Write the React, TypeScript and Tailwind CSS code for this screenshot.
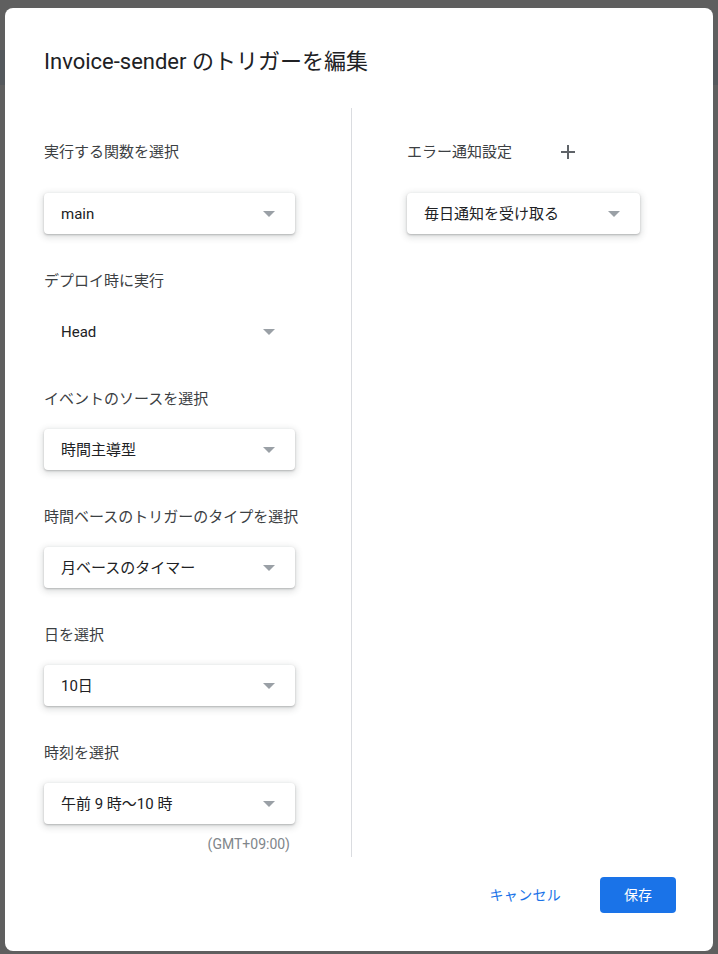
const font = "font-['Roboto','Noto_Sans_CJK_JP',sans-serif]"

function Arrow() {
  return (
    <svg width="12" height="6" viewBox="0 0 12 6" className="shrink-0">
      <path d="M0 0 L12 0 L6 6 Z" fill="#9aa0a6" />
    </svg>
  )
}

function Select({ value, width, flat = false }: { value: string; width: string; flat?: boolean }) {
  return (
    <div
      className={
        "flex h-[41px] items-center justify-between rounded-[4px] bg-white pl-[17px] pr-[20px] " +
        width +
        (flat ? "" : " shadow-[0_1px_2px_rgba(60,64,67,0.3),0_2px_6px_2px_rgba(60,64,67,0.15)]")
      }
    >
      <span className="text-[15px] leading-5 text-[#202124]">{value}</span>
      <Arrow />
    </div>
  )
}

function Label({ children, className = "" }: { children: React.ReactNode; className?: string }) {
  return <div className={"text-[15px] leading-5 text-[#3c4043] " + className}>{children}</div>
}

export default function App() {
  return (
    <div
      className={
        "h-[954px] w-[718px] overflow-hidden pl-[5px] pt-[8px] bg-[linear-gradient(to_bottom,#5f5f5f_50px,#55595d_50px,#55595d_85px,#5f5f5f_85px)] " +
        font
      }
    >
      <div className="flex h-[943px] w-[708px] flex-col rounded-[8px] bg-white">
        <h1 className="mt-[40px] pl-[39px] text-[22px] leading-7 text-[#202124]">
          Invoice-sender のトリガーを編集
        </h1>

        <div className="mt-[32px] flex">
          {/* left column */}
          <div className="flex w-[346px] flex-col pl-[39px] pb-[3px]">
            <Label className="mt-[34px]">実行する関数を選択</Label>
            <div className="mt-[31px]">
              <Select value="main" width="w-[251px]" />
            </div>

            <Label className="mt-[37px]">デプロイ時に実行</Label>
            <div className="mt-[20px]">
              <Select value="Head" width="w-[251px]" flat />
            </div>

            <Label className="mt-[37px]">イベントのソースを選択</Label>
            <div className="mt-[20px]">
              <Select value="時間主導型" width="w-[251px]" />
            </div>

            <Label className="mt-[37px]">時間ベースのトリガーのタイプを選択</Label>
            <div className="mt-[20px]">
              <Select value="月ベースのタイマー" width="w-[251px]" />
            </div>

            <Label className="mt-[37px]">日を選択</Label>
            <div className="mt-[20px]">
              <Select value="10日" width="w-[251px]" />
            </div>

            <Label className="mt-[37px]">時刻を選択</Label>
            <div className="mt-[20px]">
              <Select value="午前 9 時〜10 時" width="w-[251px]" />
            </div>
            <div className="mt-[10px] w-[246px] text-right text-[14px] leading-5 text-[#80868b]">
              (GMT+09:00)
            </div>
          </div>

          {/* divider */}
          <div className="w-px bg-[#dadce0]" />

          {/* right column */}
          <div className="flex flex-col pl-[55px]">
            <div className="mt-[34px] flex items-center">
              <Label>エラー通知設定</Label>
              <svg width="14" height="14" viewBox="0 0 14 14" className="ml-[49px]">
                <path d="M7 0 V14 M0 7 H14" stroke="#5f6368" strokeWidth="2" />
              </svg>
            </div>
            <div className="mt-[31px]">
              <Select value="毎日通知を受け取る" width="w-[233px]" />
            </div>
          </div>
        </div>

        <div className="mt-[20px] flex items-center justify-end pr-[37px]">
          <button className="mr-[15px] h-[36px] px-[24px] text-[14px] tracking-[0.02em] text-[#1a73e8]">
            キャンセル
          </button>
          <button className="h-[36px] w-[76px] rounded-[4px] bg-[#1a73e8] text-[14px] text-white">
            保存
          </button>
        </div>
      </div>
    </div>
  )
}
